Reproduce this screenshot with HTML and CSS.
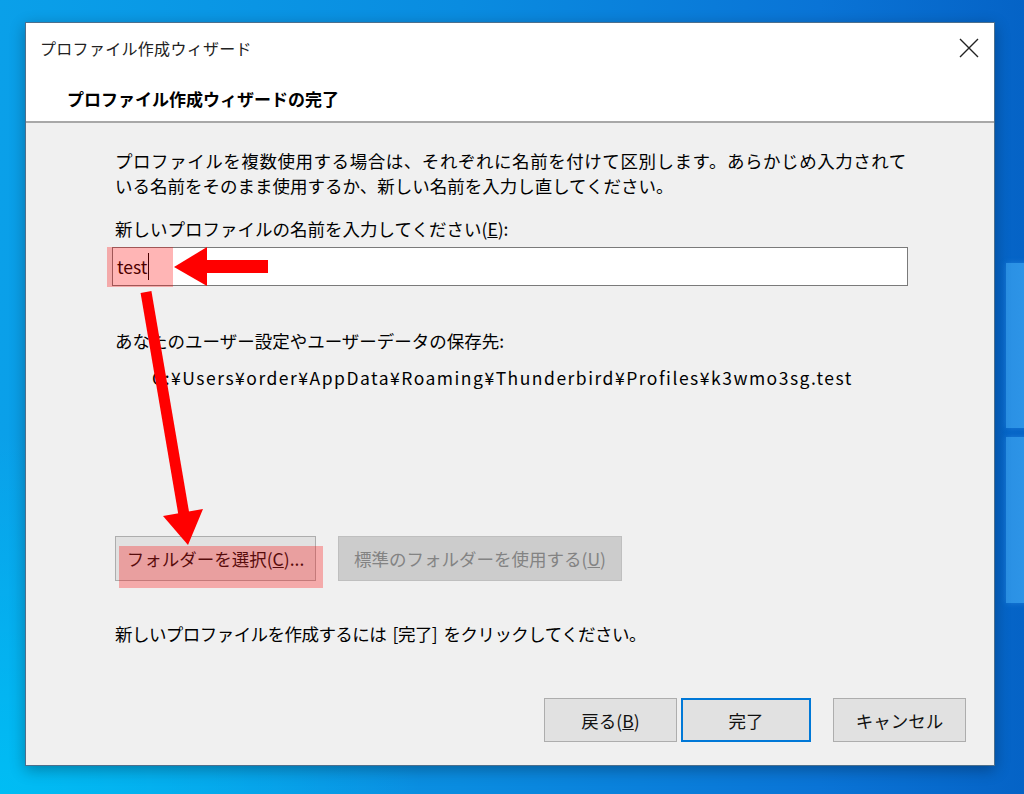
FILE: index.html
```html
<!DOCTYPE html>
<html lang="ja">
<head>
  <meta charset="UTF-8" />
  <meta name="viewport" content="width=device-width, initial-scale=1.0" />
  <title>プロファイル作成ウィザード</title>
  <link rel="stylesheet" href="styles.css">
</head>
<body>
  <div class="desktop">
    <div class="logo-pane pane-top"></div>
    <div class="logo-pane pane-bottom"></div>

    <div class="dialog">
      <div class="titlebar">
        <span class="title">プロファイル作成ウィザード</span>
        <button class="close-btn" aria-label="閉じる">
          <svg width="20" height="20" viewBox="0 0 20 20"><path d="M1 1 L19 19 M19 1 L1 19" stroke="#222" stroke-width="1.4" fill="none"/></svg>
        </button>
      </div>

      <div class="wizard-header">プロファイル作成ウィザードの完了</div>

      <div class="wizard-body">
        <p class="intro"><span class="intro-first">プロファイルを複数使用する場合は、それぞれに名前を付けて区別します。あらかじめ入力されて</span><br>いる名前をそのまま使用するか、新しい名前を入力し直してください。</p>
        <p class="field-label">新しいプロファイルの名前を入力してください(<u>E</u>):</p>
        <div class="name-input"><span>test</span><span class="caret"></span></div>

        <p class="field-label store-label">あなたのユーザー設定やユーザーデータの保存先:</p>
        <p class="path">C:¥Users¥order¥AppData¥Roaming¥Thunderbird¥Profiles¥k3wmo3sg.test</p>

        <div class="folder-buttons">
          <button class="btn btn-folder">フォルダーを選択(<u>C</u>)...</button>
          <button class="btn btn-default-folder" disabled>標準のフォルダーを使用する(<u>U</u>)</button>
        </div>

        <p class="finish-hint">新しいプロファイルを作成するには [完了] をクリックしてください。</p>
      </div>

      <div class="wizard-footer">
        <button class="btn btn-nav">戻る(<u>B</u>)</button>
        <button class="btn btn-nav btn-primary">完了</button>
        <button class="btn btn-nav btn-cancel">キャンセル</button>
      </div>
    </div>

    <!-- screenshot annotations -->
    <svg class="annotations" width="1024" height="794" viewBox="0 0 1024 794">
      <rect x="107" y="247" width="66" height="40" fill="rgba(255,0,0,0.29)"/>
      <rect x="119" y="546" width="204" height="42" fill="rgba(255,0,0,0.29)"/>
      <rect x="205" y="260" width="63" height="13" fill="#ff0000"/>
      <polygon points="174,267 207,247 207,286" fill="#ff0000"/>
      <line x1="146" y1="292" x2="184" y2="515" stroke="#ff0000" stroke-width="11"/>
      <polygon points="203,509 163,516 188,545" fill="#ff0000"/>
    </svg>
  </div>
</body>
</html>
```

FILE: styles.css
```css
body {
  margin: 0;
  font-family: "Noto Sans CJK JP", sans-serif;
}
.desktop {
  position: relative;
  width: 1024px;
  height: 794px;
  overflow: hidden;
  background:
    radial-gradient(ellipse 420px 360px at 0% 100%, #00bdf4 0%, rgba(0,189,244,0) 100%),
    linear-gradient(to right, #0aa0e9 0%, #0a8ce0 45%, #0a74d6 80%, #0563c6 100%);
}
.logo-pane {
  position: absolute;
  left: 1006px;
  width: 40px;
  background: linear-gradient(to right, #2a90e4, #3199ea);
  box-shadow: 0 0 6px rgba(60,160,240,0.4);
}
.pane-top { top: 263px; height: 165px; }
.pane-bottom { top: 437px; height: 166px; }

.dialog {
  position: relative;
  margin: 22px 0 0 25px;
  width: 970px;
  height: 744px;
  box-sizing: border-box;
  border: 1px solid #4d6f8c;
  background: #f0f0f0;
  color: #000;
  display: flex;
  flex-direction: column;
  box-shadow: 0 4px 14px rgba(0,0,0,0.3);
}
.titlebar {
  height: 49px;
  background: #fff;
  display: flex;
  align-items: center;
  justify-content: space-between;
  padding-left: 14px;
}
.title {
  font-size: 16px;
  letter-spacing: 0.3px;
  color: #222;
}
.close-btn {
  width: 60px;
  height: 49px;
  border: none;
  background: transparent;
  display: flex;
  align-items: center;
  justify-content: center;
  padding: 0 0 0 10px;
}
.wizard-header {
  height: 51px;
  background: #fff;
  padding-left: 41px;
  padding-top: 4px;
  box-sizing: border-box;
  display: flex;
  align-items: center;
  font-size: 17px;
  font-weight: bold;
  border-bottom: 2px solid #a8a8a8;
}
.wizard-body {
  padding: 25px 0 0 89px;
  font-size: 17.5px;
}
.wizard-body p {
  margin: 0;
  line-height: 25px;
}
.intro-first {
  letter-spacing: 0.55px;
}
.field-label {
  margin-top: 18px !important;
}
.name-input {
  margin: 6px 0 0 -3px;
  width: 796px;
  height: 39px;
  box-sizing: border-box;
  border: 1px solid #7a7a7a;
  background: #fff;
  display: flex;
  align-items: center;
  padding-left: 4px;
}
.caret {
  width: 1px;
  height: 27px;
  background: #000;
  margin-left: 1px;
}
.store-label {
  margin-top: 42px !important;
}
.path {
  margin-top: 12px !important;
  padding-left: 37px;
  letter-spacing: 1.5px;
}
.folder-buttons {
  display: flex;
  gap: 22px;
  margin-top: 146px;
}
.btn {
  font-family: inherit;
  font-size: 17.5px;
  color: #111;
  background: #e1e1e1;
  border: 1px solid #adadad;
  padding: 0;
  box-sizing: border-box;
}
.btn-folder { width: 201px; height: 45px; }
.btn-default-folder {
  width: 284px;
  height: 45px;
  background: #cccccc;
  border-color: #bfbfbf;
  color: #838383;
}
.finish-hint {
  margin-top: 40px !important;
  word-spacing: 3px;
  letter-spacing: -0.55px;
}
.wizard-footer {
  margin-top: auto;
  display: flex;
  justify-content: flex-end;
  gap: 4px;
  padding: 0 28px 23px 0;
}
.btn-nav { width: 133px; height: 44px; }
.btn-primary {
  width: 130px;
  border: 2px solid #0078d7;
}
.btn-cancel { margin-left: 18px; }
.annotations {
  position: absolute;
  left: 0;
  top: 0;
  pointer-events: none;
}
```
